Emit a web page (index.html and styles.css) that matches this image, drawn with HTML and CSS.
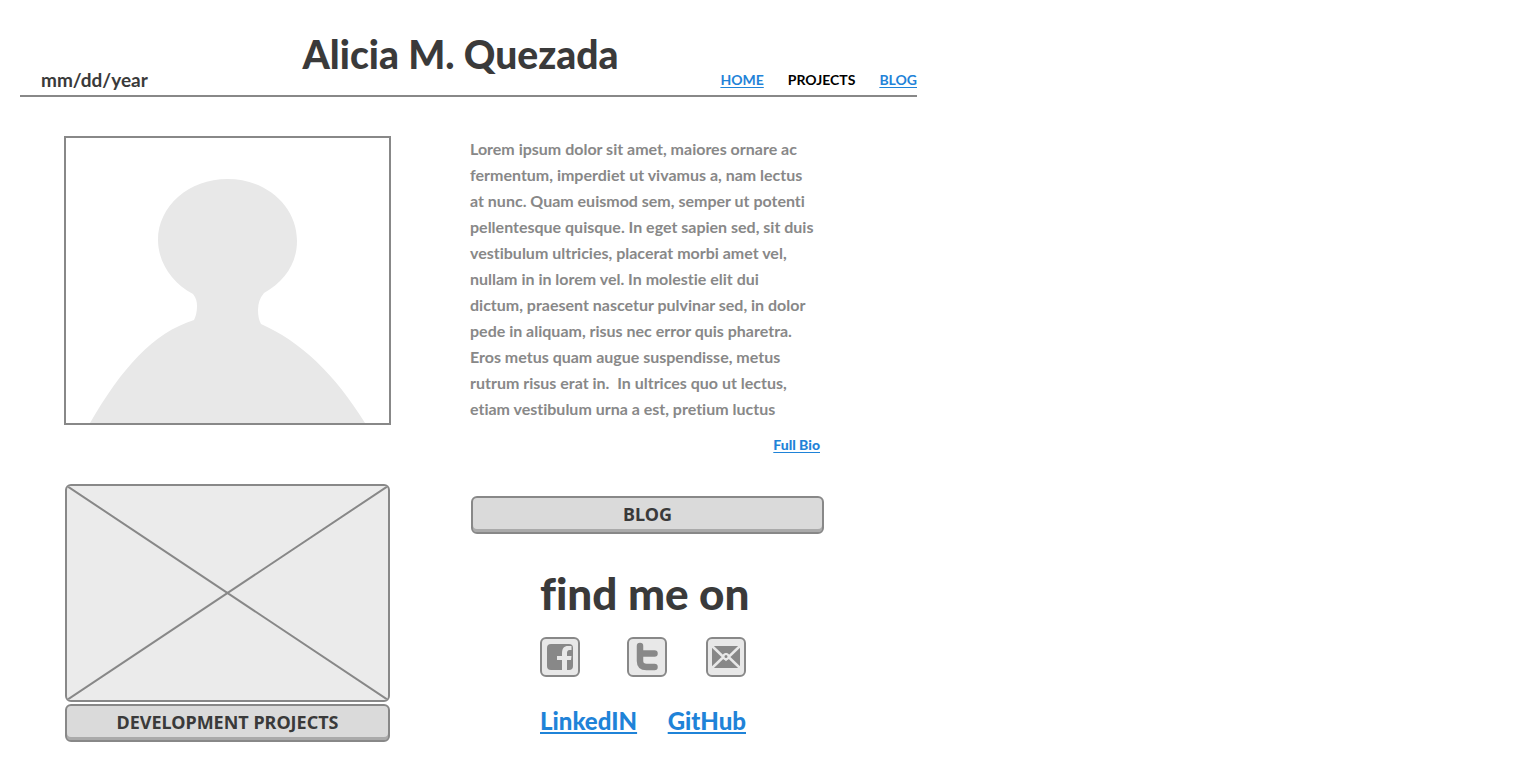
FILE: index.html
```html
<!DOCTYPE html>
<html lang="en">
<head>
<meta charset="utf-8">
<meta name="viewport" content="width=device-width, initial-scale=1">
<title>Alicia M. Quezada</title>
<link rel="stylesheet" href="styles.css">
</head>
<body>
<div class="page">
  <header class="header">
    <p class="date">mm/dd/year</p>
    <h1 class="name">Alicia M. Quezada</h1>
    <nav class="nav">
      <a class="link" href="#home">HOME</a>
      <span class="current">PROJECTS</span>
      <a class="link" href="#blog">BLOG</a>
    </nav>
  </header>
  <main class="main">
    <section class="column">
      <svg class="portrait" viewBox="0 0 323 285" role="img" aria-label="Portrait">
        <path fill="#e8e8e8" d="M24 285C56 230 87 195 128 182Q131 176 131 168Q131 161 127 156C106 145 92 124 92 102C92 68 123 41 161.500 41C200 41 231 68 231 103C231 125 219 143 198 155Q192 162 192 172Q192 181 195 186C234 203 269 236 299 285Z"/>
      </svg>
      <div class="projects">
        <svg class="thumb" viewBox="0 0 321 214" preserveAspectRatio="none" role="img" aria-label="Project image">
          <path d="M0 0L321 214M321 0L0 214" stroke="#888" stroke-width="2"/>
        </svg>
        <button class="button" type="button">DEVELOPMENT PROJECTS</button>
      </div>
    </section>
    <section class="column">
      <p class="bio">Lorem ipsum dolor sit amet, maiores ornare ac<br>
        fermentum, imperdiet ut vivamus a, nam lectus<br>
        at nunc. Quam euismod sem, semper ut potenti<br>
        pellentesque quisque. In eget sapien sed, sit duis<br>
        vestibulum ultricies, placerat morbi amet vel,<br>
        nullam in in lorem vel. In molestie elit dui<br>
        dictum, praesent nascetur pulvinar sed, in dolor<br>
        pede in aliquam, risus nec error quis pharetra.<br>
        Eros metus quam augue suspendisse, metus<br>
        rutrum risus erat in.&nbsp; In ultrices quo ut lectus,<br>
        etiam vestibulum urna a est, pretium luctus</p>
      <a class="link full-bio" href="#bio">Full Bio</a>
      <button class="button blog" type="button">BLOG</button>
      <div class="social">
        <h2 class="find">find me on</h2>
        <div class="icons">
          <a class="icon" href="#facebook" aria-label="Facebook">
            <svg viewBox="0 0 36 36"><rect x="5" y="5" width="26" height="26" rx="4" fill="#888"/><path fill="#e8e8e8" d="M20 31V21H15V17H20V14C20 9.500 22 7 26 7H29.500V11H27.500C25.500 11 25 12.500 25 14V17H29.500L29 21H25V31Z"/></svg>
          </a>
          <a class="icon" href="#twitter" aria-label="Twitter">
            <svg viewBox="0 0 36 36"><path d="M11 7V22Q11 28 17.500 28H25.500M11 14.500H25.500" fill="none" stroke="#888" stroke-width="6.500" stroke-linecap="round" stroke-linejoin="round"/></svg>
          </a>
          <a class="icon" href="#mail" aria-label="Email">
            <svg viewBox="0 0 36 36"><path fill="#888" d="M4 7H32V29H4Z"/><path d="M4 7L18 20.500L32 7M4 29L18 15.500L32 29" fill="none" stroke="#e8e8e8" stroke-width="2.500"/><circle cx="18" cy="17.500" r="2.500" fill="#888" stroke="#e8e8e8" stroke-width="2"/></svg>
          </a>
        </div>
        <div class="profiles">
          <a class="link" href="#linkedin">LinkedIN</a>
          <a class="link" href="#github">GitHub</a>
        </div>
      </div>
    </section>
  </main>
</div>
</body>
</html>
```
FILE: styles.css
```css
* { box-sizing: border-box; }
body {
  margin: 0;
  background: #fff;
  color: #3a3a3a;
  font-family: Lato, "Noto Sans", sans-serif;
  font-variant-ligatures: none;
}
p, h1, h2 { margin: 0; }
.page { max-width: 937px; padding: 28px 20px 20px; }
.header {
  display: grid;
  grid-template-columns: 1fr auto 1fr;
  align-items: end;
  padding-bottom: 2px;
  border-bottom: 2px solid #888;
}
.date { padding-left: 21px; font-size: 19px; font-weight: 700; line-height: 26px; }
.name { padding: 1px 16px 14px 0; font-size: 39px; font-weight: 900; line-height: 50px; }
.nav { display: flex; justify-content: flex-end; gap: 24px; font-size: 14px; font-weight: 700; line-height: 26px; }
.link { color: #1f83d8; text-decoration: underline; text-underline-offset: 2px; }
.current { color: #000; }
.main {
  display: grid;
  grid-template-columns: 327fr 354fr;
  column-gap: 79px;
  padding: 39px 93px 0 44px;
}
.column { display: flex; flex-direction: column; min-width: 0; }
.portrait { display: block; width: 100%; border: 2px solid #888; }
.projects { display: flex; flex-direction: column; gap: 2px; margin-top: 59px; padding: 0 1px; }
.thumb { display: block; width: 100%; border: 2px solid #888; border-radius: 6px; background: #ebebeb; }
.button {
  height: 38px;
  padding: 0 6px 2px;
  border: 2px solid #888;
  border-radius: 6px;
  background: #dadada;
  box-shadow: inset 0 -3px #aaa;
  color: #3a3a3a;
  font: 700 18px/26px "Noto Sans", sans-serif;
}
.bio { color: #888; font-size: 16px; font-weight: 700; line-height: 26px; white-space: nowrap; }
.full-bio { align-self: flex-end; margin: 10px 4px 0 0; font-size: 14px; font-weight: 900; line-height: 26px; }
.blog { margin: 38px 0 0 1px; }
.social { align-self: center; width: 206px; margin-top: 29px; margin-right: 8px; }
.find { font-size: 44px; font-weight: 900; line-height: 60px; white-space: nowrap; }
.icons { display: grid; grid-template-columns: 87px 79px 40px; margin-top: 14px; }
.icon { width: 40px; height: 40px; border: 2px solid #888; border-radius: 6px; background: #e8e8e8; }
.icon svg { display: block; }
.profiles { display: flex; justify-content: space-between; margin-top: 29px; font-size: 24px; font-weight: 900; line-height: 30px; }
```
